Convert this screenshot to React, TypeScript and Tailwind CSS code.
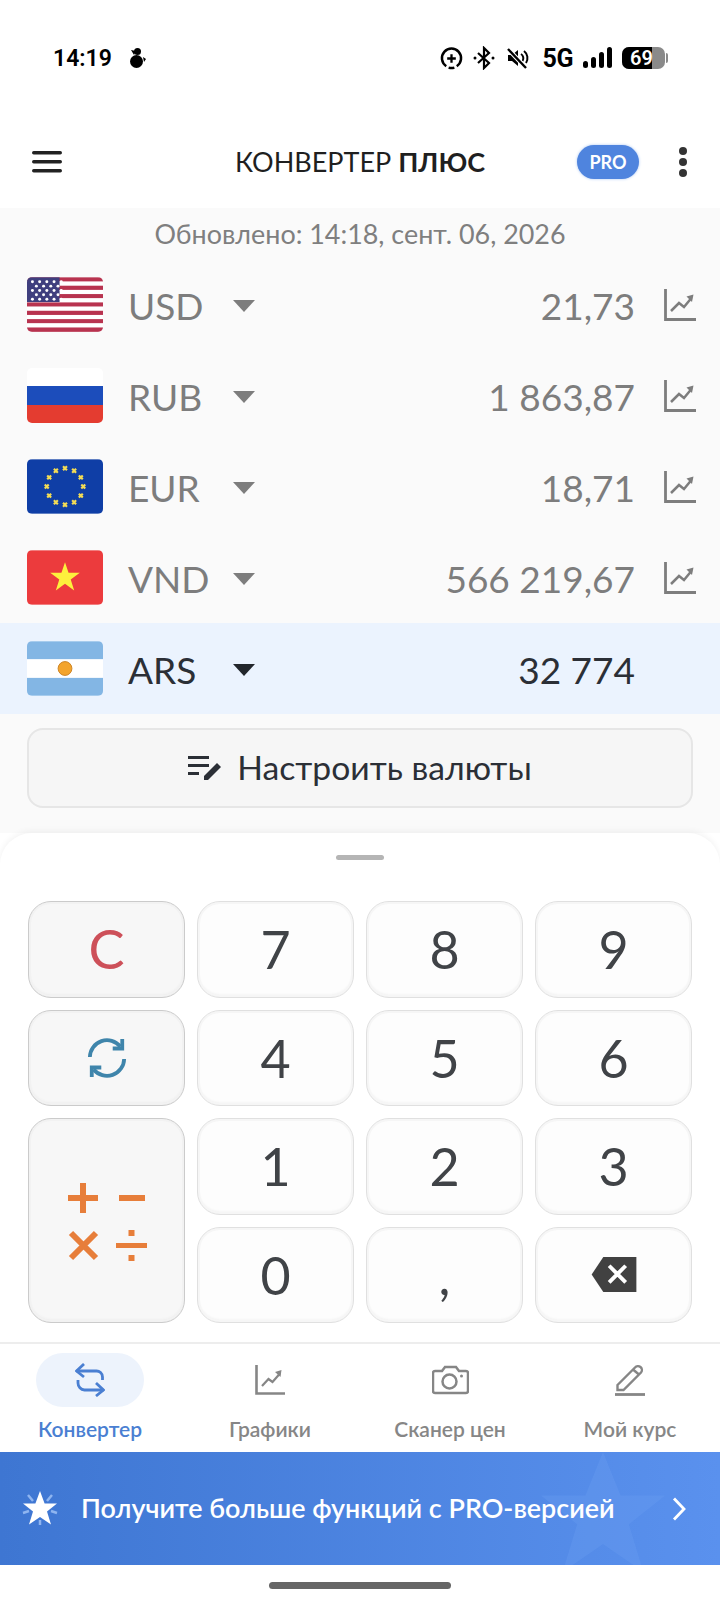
import React from "react";

const lato = "font-['Lato','Noto_Sans',sans-serif]";

function ChartIcon({ className = "" }: { className?: string }) {
  return (
    <svg viewBox="0 0 34 34" className={className} fill="none" stroke="currentColor">
      <path d="M2.500 1v30.500H33" strokeWidth="2.800" />
      <path d="M8 23l8-8 5 4 7-8.500" strokeWidth="2.500" />
      <path d="M23.500 8.500l7-2-1.500 7.500z" fill="currentColor" stroke="none" />
    </svg>
  );
}

function Triangle({ color }: { color: string }) {
  return (
    <svg viewBox="0 0 22 12" className="w-[22px] h-[12px] mt-[2px] shrink-0">
      <path d="M0 0h22L11 12z" fill={color} />
    </svg>
  );
}

function UsFlag() {
  const stripes = Array.from({ length: 13 }, (_, i) => i);
  const stars: [number, number][] = [];
  for (let r = 0; r < 5; r++) {
    const odd = r % 2 === 1;
    for (let c = 0; c < (odd ? 4 : 5); c++) {
      stars.push([(odd ? 9.5 : 5.5) + c * 7.3, 4.5 + r * 4.4]);
    }
  }
  return (
    <svg viewBox="0 0 77 55" className="w-full h-full">
      {stripes.map((i) => (
        <rect key={i} x="0" y={(i * 55) / 13} width="77" height={55 / 13 + 0.2} fill={i % 2 ? "#ffffff" : "#b8334f"} />
      ))}
      <rect width="33" height="25" fill="#3f3f7e" />
      {stars.map(([x, y], i) => (
        <circle key={i} cx={x} cy={y} r="1.5" fill="#fff" />
      ))}
    </svg>
  );
}

function RuFlag() {
  return (
    <div className="w-full h-full flex flex-col">
      <div className="flex-1 bg-white" />
      <div className="flex-1 bg-[#1c4dbb]" />
      <div className="flex-1 bg-[#e43c30]" />
    </div>
  );
}

function EuFlag() {
  const pts = Array.from({ length: 12 }, (_, i) => {
    const a = (i * Math.PI) / 6;
    return [38.5 + 18.5 * Math.sin(a), 27.5 - 18.5 * Math.cos(a)];
  });
  return (
    <svg viewBox="0 0 77 55" className="w-full h-full">
      <rect width="77" height="55" fill="#0f3ea6" />
      {pts.map(([x, y], i) => (
        <path key={i} d={`M${x - 2} ${y - 2}L${x + 2} ${y + 2}M${x + 2} ${y - 2}L${x - 2} ${y + 2}`} stroke="#f3dc55" strokeWidth="2.200" />
      ))}
    </svg>
  );
}

function VnFlag() {
  return (
    <svg viewBox="0 0 77 55" className="w-full h-full">
      <rect width="77" height="55" fill="#ec3b3d" />
      <path d="M38.500 12l3.600 10.700h11.400l-9.200 6.900 3.500 11-9.300-6.800-9.300 6.800 3.500-11-9.200-6.900h11.400z" fill="#fdf03d" />
    </svg>
  );
}

function ArFlag() {
  return (
    <svg viewBox="0 0 77 55" className="w-full h-full">
      <rect width="77" height="55" fill="#83b6e4" />
      <rect y="18" width="77" height="19" fill="#ffffff" />
      <circle cx="38.500" cy="27.500" r="7" fill="#f3a42c" stroke="#cc8427" strokeWidth="1" />
    </svg>
  );
}

const rows = [
  { code: "USD", value: "21,73", Flag: UsFlag },
  { code: "RUB", value: "1 863,87", Flag: RuFlag },
  { code: "EUR", value: "18,71", Flag: EuFlag },
  { code: "VND", value: "566 219,67", Flag: VnFlag },
];

function Row({ code, value, Flag, active }: { code: string; value: string; Flag: React.ComponentType; active?: boolean }) {
  return (
    <div className={`h-[91px] flex items-center pl-[27px] pr-[23px] ${active ? "bg-[#ebf3fe] text-[#2b2f36]" : "text-[#7d7d7d]"}`}>
      <div className="w-[76px] h-[55px] rounded-[5px] overflow-hidden shrink-0">
        <Flag />
      </div>
      <span className="ml-[25px] w-[105px] text-[37px] leading-none pt-[2px]">{code}</span>
      <Triangle color={active ? "#22262c" : "#7d7d7d"} />
      <span className="flex-1 text-right text-[37px] leading-none pt-[2px]">{value}</span>
      <div className="w-[62px] flex justify-end">
        {!active && <ChartIcon className="w-[34px] h-[34px] text-[#7d7d7d]" />}
      </div>
    </div>
  );
}

function Key({ children, fn, className = "" }: { children: React.ReactNode; fn?: boolean; className?: string }) {
  return (
    <div
      className={`rounded-[23px] border-[1.5px] flex items-center justify-center ${
        fn
          ? "bg-[#f7f7f7] border-[#cbcbcb] shadow-[inset_0_0_0_2px_#f2f2f2,inset_0_-2px_3px_#e9e9e9]"
          : "bg-[#fdfdfd] border-[#e0e0e0] shadow-[inset_0_0_0_2px_#f6f6f6,inset_0_-2px_3px_#eeeeee]"
      } ${className}`}
    >
      {children}
    </div>
  );
}

function Digit({ v }: { v: string }) {
  return (
    <Key>
      <span className="text-[52px] leading-none text-[#404347]">{v}</span>
    </Key>
  );
}

function StatusIcons() {
  return (
    <div className="flex items-center">
      <svg viewBox="0 0 24 24" className="w-[23px] h-[23px] text-black" fill="none" stroke="currentColor">
        <path d="M6.500 20A10 10 0 1 1 17.500 20M9 21.500a10 10 0 0 0 6 0" strokeWidth="2.600" />
        <path d="M12 7.500v9M7.500 12h9" strokeWidth="2.400" />
      </svg>
      <svg viewBox="0 0 24 24" className="w-[24px] h-[24px] ml-[9px]" fill="none" stroke="#000">
        <path d="M6 7l11 10-5 5V2l5 5L6 17" strokeWidth="2.200" />
        <circle cx="3" cy="12" r="1.500" fill="#000" stroke="none" />
        <circle cx="21" cy="12" r="1.500" fill="#000" stroke="none" />
      </svg>
      <svg viewBox="0 0 24 24" className="w-[24px] h-[24px] ml-[9px]">
        <path d="M3 9h4l6-5v16l-6-5H3z" fill="#000" />
        <path d="M16 8a5 5 0 0 1 1.500 7M19 5a9 9 0 0 1 2 12" stroke="#000" strokeWidth="2" fill="none" />
        <path d="M3 3l18 19" stroke="#fff" strokeWidth="4.500" />
        <path d="M3 3l18 19" stroke="#000" strokeWidth="2.400" />
      </svg>
      <span className="ml-[14px] text-[25px] leading-none font-bold text-black font-['Roboto',sans-serif] tracking-[-0.5px]">5G</span>
      <svg viewBox="0 0 30 24" className="w-[30px] h-[24px] ml-[10px]" fill="#000">
        <rect x="0" y="15" width="5" height="7" rx="2.500" />
        <rect x="8" y="11" width="5" height="11" rx="2.500" />
        <rect x="16" y="6" width="5" height="16" rx="2.500" />
        <rect x="24" y="1" width="5" height="21" rx="2.500" />
      </svg>
      <div className="relative ml-[9px] w-[43px] h-[22px] rounded-[7px] bg-[#8a8a8a] overflow-hidden">
        <div className="absolute inset-y-0 left-0 w-[30px] bg-black" />
        <span className="absolute inset-y-0 left-[8px] flex items-center text-[20px] leading-none font-semibold text-white font-['Roboto',sans-serif]">
          69
        </span>
      </div>
      <div className="ml-[1px] w-[2px] h-[10px] rounded-r-sm bg-[#8a8a8a]" />
    </div>
  );
}

export default function App() {
  return (
    <div className={`w-[720px] h-[1606px] bg-white flex flex-col overflow-hidden ${lato}`}>
      {/* status bar */}
      <div className="h-[116px] shrink-0 pt-[42px] pl-[53px] pr-[52px] flex items-start justify-between">
        <div className="flex items-center h-[32px]">
          <span className="text-[23px] leading-none font-semibold text-black font-['Roboto',sans-serif]">14:19</span>
          <svg viewBox="0 0 18 22" className="w-[18px] h-[22px] ml-[16px]" fill="#000">
            <circle cx="9.500" cy="4.500" r="3.500" />
            <path d="M3 3l5 1-2 4zM15 10l3 2-2 3z" />
            <ellipse cx="8.500" cy="14.500" rx="6.500" ry="6.500" />
          </svg>
        </div>
        <div className="h-[32px] flex items-center">
          <StatusIcons />
        </div>
      </div>

      {/* header */}
      <div className="h-[92px] shrink-0 relative flex items-center justify-center">
        <svg viewBox="0 0 30 22" className="absolute left-[32px] top-[35px] w-[30px] h-[22px]" fill="#222">
          <rect width="30" height="3.400" rx="1.700" />
          <rect y="9" width="30" height="3.400" rx="1.700" />
          <rect y="18" width="30" height="3.400" rx="1.700" />
        </svg>
        <div className="text-[27px] leading-none text-[#1f1f1f] -mt-[1px]">
          КОНВЕРТЕР <span className="font-bold">ПЛЮС</span>
        </div>
        <div className="absolute left-[577px] top-[29px] w-[62px] h-[34px] rounded-full bg-[#4f84de] shadow-[0_0_3px_#a9c6f2] flex items-center justify-center text-white text-[18px] font-bold leading-none">
          PRO
        </div>
        <div className="absolute left-[679px] top-[31px] w-[9px] flex flex-col gap-[3px]">
          <div className="w-[8px] h-[8px] rounded-full bg-[#333]" />
          <div className="w-[8px] h-[8px] rounded-full bg-[#333]" />
          <div className="w-[8px] h-[8px] rounded-full bg-[#333]" />
        </div>
      </div>

      {/* list */}
      <div className="h-[625px] shrink-0 bg-[#fafafa] flex flex-col">
        <div className="h-[51px] pt-[2px] flex items-center justify-center text-[26.900px] leading-none text-[#7f7f7f] shrink-0">
          Обновлено: 14:18, сент. 06, 2026
        </div>
        {rows.map((r) => (
          <Row key={r.code} {...r} />
        ))}
        <Row code="ARS" value="32 774" Flag={ArFlag} active />
        <div className="px-[27px] pt-[14px]">
          <div className="h-[80px] rounded-[16px] bg-[#f6f6f6] border-2 border-[#e6e6e6] flex items-center justify-center text-[#2b2f36]">
            <svg viewBox="0 0 34 26" className="w-[34px] h-[26px]" fill="#2b2f36">
              <rect x="0" y="1" width="21" height="3" />
              <rect x="0" y="9" width="21" height="3" />
              <rect x="0" y="17" width="11" height="3" />
              <path d="M16 21l13-13 4 4-13 13h-4z" />
            </svg>
            <span className="ml-[15px] text-[33.700px] leading-none">Настроить валюты</span>
          </div>
        </div>
      </div>

      {/* keypad sheet */}
      <div className="h-[509px] shrink-0 bg-white rounded-t-[32px] shadow-[0_-2px_6px_rgba(0,0,0,0.05)] px-[28px] flex flex-col">
        <div className="h-[68px] pt-[22px] flex justify-center shrink-0">
          <div className="w-[48px] h-[5px] rounded-full bg-[#b5b5b5]" />
        </div>
        <div className="grid grid-cols-4 grid-rows-4 gap-x-[12px] gap-y-[12px] h-[422px]">
          <Key fn>
            <span className="text-[54px] leading-none text-[#cd5059]">C</span>
          </Key>
          <Digit v="7" />
          <Digit v="8" />
          <Digit v="9" />
          <Key fn>
            <svg viewBox="0 0 42 42" className="w-[40px] h-[40px]" fill="none" stroke="#3f85ab" strokeWidth="4">
              <path d="M3 20A18 18 0 0 1 35 9" />
              <path d="M37 1v10H27" />
              <path d="M39 22A18 18 0 0 1 7 33" />
              <path d="M5 41V31h10" />
            </svg>
          </Key>
          <Digit v="4" />
          <Digit v="5" />
          <Digit v="6" />
          <Key fn className="row-span-2">
            <svg viewBox="0 0 80 80" className="w-[80px] h-[80px]" fill="none" stroke="#e77e3a" strokeWidth="6">
              <path d="M1 17h30M16 2v30" />
              <path d="M52 17h26" />
              <path d="M4 52l25 25M29 52L4 77" />
              <path d="M49 64.500h31" strokeWidth="5" />
              <rect x="61.500" y="49" width="6" height="6" fill="#e77e3a" stroke="none" />
              <rect x="61.500" y="74" width="6" height="6" fill="#e77e3a" stroke="none" />
            </svg>
          </Key>
          <Digit v="1" />
          <Digit v="2" />
          <Digit v="3" />
          <Digit v="0" />
          <Digit v="," />
          <Key>
            <svg viewBox="0 0 46 36" className="w-[46px] h-[35px]">
              <path d="M12 0h34v36H12L0 18z" fill="#414141" />
              <path d="M18 9l17 17M35 9L18 26" stroke="#fff" strokeWidth="4" />
            </svg>
          </Key>
        </div>
      </div>

      {/* nav */}
      <div className="h-[110px] shrink-0 border-t-2 border-[#ededed] bg-white grid grid-cols-4">
        <NavItem label="Конвертер" active>
          <svg viewBox="0 0 30 34" className="w-[30px] h-[34px]" fill="none" stroke="#4a7fd2" strokeWidth="2.800">
            <path d="M9 1L1.500 8 9 14" />
            <path d="M1.500 8H21a6 6 0 0 1 6.500 6v3" />
            <path d="M3 17v3a7 7 0 0 0 6.500 7H28.500" />
            <path d="M21 20l7.500 7-7.500 6" />
          </svg>
        </NavItem>
        <NavItem label="Графики">
          <svg viewBox="0 0 30 30" className="w-[30px] h-[30px]" fill="none" stroke="currentColor">
            <path d="M1.500 0v28.500H30" strokeWidth="2.600" />
            <path d="M7 21l6.500-7 4 3 7-8" strokeWidth="2.200" />
            <path d="M20 7l6.500-2-1 7z" fill="currentColor" stroke="none" />
          </svg>
        </NavItem>
        <NavItem label="Сканер цен">
          <svg viewBox="0 0 37 30" className="w-[37px] h-[30px]" fill="none" stroke="currentColor" strokeWidth="2.500">
            <path d="M3 6h7l3-4h11l3 4h7a2 2 0 0 1 2 2v18a2 2 0 0 1-2 2H3a2 2 0 0 1-2-2V8a2 2 0 0 1 2-2z" />
            <circle cx="17.500" cy="16.500" r="7" />
            <circle cx="29.500" cy="11" r="1.500" fill="currentColor" stroke="none" />
          </svg>
        </NavItem>
        <NavItem label="Мой курс">
          <svg viewBox="0 0 32 32" className="w-[32px] h-[32px]" fill="none" stroke="currentColor" strokeWidth="2.400">
            <path d="M3.500 21L21 3.500a3.500 3.500 0 0 1 6 5L9.500 26H3.500z" />
            <path d="M19 5.500l6 5" />
            <path d="M1 30.500h30" strokeWidth="2.800" />
          </svg>
        </NavItem>
      </div>

      {/* banner */}
      <div className="h-[113px] shrink-0 relative overflow-hidden flex items-center bg-gradient-to-r from-[#3e76d2] to-[#5a91ee] text-white">
        <svg viewBox="0 0 120 120" className="absolute left-[541px] top-0 w-[124px] h-[124px]" fill="#6b9ff0" fillOpacity="0.35">
          <path d="M60 0l17 42h43L85 70l14 46-39-27-39 27 14-46L0 42h43z" />
        </svg>
        <svg viewBox="0 0 38 38" className="absolute left-[21px] top-[37px] w-[38px] h-[38px]">
          <g stroke="#8fb5f0" strokeWidth="2.500">
            <path d="M7 6l5 6M31 6l-5 6M2 24l6-2M36 24l-6-2M19 36v-5" />
          </g>
          <path d="M19 2l4.600 12.500H36L26 22.500l4 13-11-7.500-11 7.500 4-13L2 14.500h12.400z" fill="#fff" />
        </svg>
        <span className="relative ml-[81px] text-[26.900px] leading-none font-semibold whitespace-nowrap">Получите больше функций с PRO-версией</span>
        <svg viewBox="0 0 14 24" className="absolute left-[672px] top-[45px] w-[14px] h-[24px]" fill="none" stroke="#fff" strokeWidth="2.800">
          <path d="M2 1.500l10 10.500L2 22.500" />
        </svg>
      </div>

      {/* home indicator */}
      <div className="flex-1 flex justify-center pt-[17px]">
        <div className="w-[182px] h-[7px] rounded-full bg-[#666]" />
      </div>
    </div>
  );
}

function NavItem({ label, active, children }: { label: string; active?: boolean; children: React.ReactNode }) {
  return (
    <div className={`flex flex-col items-center pt-[9px] ${active ? "text-[#4a7fd2]" : "text-[#868686]"}`}>
      <div className={`w-[108px] h-[54px] rounded-[27px] flex items-center justify-center ${active ? "bg-[#edf3fc]" : ""}`}>
        {children}
      </div>
      <span className="mt-[10px] text-[21px] leading-[24px] font-semibold whitespace-nowrap">{label}</span>
    </div>
  );
}
